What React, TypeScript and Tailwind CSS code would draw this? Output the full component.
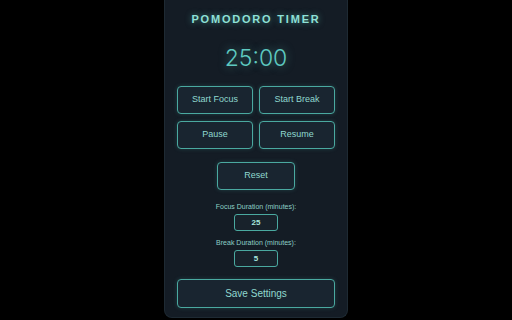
import React, { useState } from 'react';

// 按钮通用样式
const btn =
  'h-[28px] rounded-[4px] border border-[#4aa9a0] bg-[#192530] text-[#8fd8cf] text-[9px] shadow-[0_0_4px_rgba(74,169,160,0.25)]';

const App = () => {
  const [focus, setFocus] = useState('25');
  const [brk, setBrk] = useState('5');

  return (
    <div
      className="w-[512px] h-[320px] bg-black flex justify-center overflow-hidden"
      style={{ fontFamily: '"Liberation Sans", Arial, sans-serif' }}
    >
      <div className="w-[184px] h-[318px] bg-[#141c25] rounded-b-[8px] border border-t-0 border-[#1e2a33] px-[12px] flex flex-col items-center">
        <h1 className="mt-[14px] text-[11px] font-bold tracking-[1.8px] text-[#8ee0d6] [text-shadow:0_0_6px_rgba(94,201,192,0.6)] leading-none">
          POMODORO TIMER
        </h1>

        <div
          className="mt-[22px] text-[23px] leading-none text-[#5ec9c0] [text-shadow:0_0_8px_rgba(94,201,192,0.5)]"
          style={{ fontFamily: 'Inter, sans-serif', fontWeight: 300 }}
        >
          25:00
        </div>

        <div className="mt-[16px] w-full grid grid-cols-2 gap-x-[6px] gap-y-[7px]">
          <button className={btn}>Start Focus</button>
          <button className={btn}>Start Break</button>
          <button className={btn}>Pause</button>
          <button className={btn}>Resume</button>
        </div>

        <button className={`${btn} mt-[13px] w-[78px]`}>Reset</button>

        <label className="mt-[13px] text-[7px] leading-none text-[#8ccfc6]">Focus Duration (minutes):</label>
        <input
          value={focus}
          onChange={(e) => setFocus(e.target.value)}
          className="mt-[4px] w-[44px] h-[17px] rounded-[3px] border border-[#4aa9a0] bg-[#18222b] text-center text-[8px] font-bold text-[#a6e6de] outline-none"
        />

        <label className="mt-[8px] text-[7px] leading-none text-[#8ccfc6]">Break Duration (minutes):</label>
        <input
          value={brk}
          onChange={(e) => setBrk(e.target.value)}
          className="mt-[4px] w-[44px] h-[17px] rounded-[3px] border border-[#4aa9a0] bg-[#18222b] text-center text-[8px] font-bold text-[#a6e6de] outline-none"
        />

        <button className={`${btn} mt-[12px] w-full h-[29px] text-[10px]`}>Save Settings</button>
      </div>
    </div>
  );
};

export default App;
